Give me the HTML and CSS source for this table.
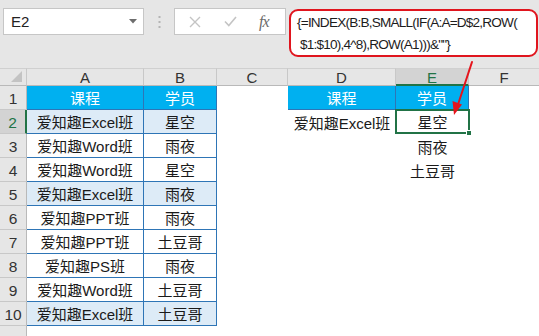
FILE: index.html
```html
<!DOCTYPE html>
<html>
<head>
<meta charset="utf-8">
<link rel="stylesheet" href="styles.css">
</head>
<body>
<div class="app">
  <div class="toolbar">
    <div class="namebox">
      <span class="nb-text">E2</span>
      <svg class="nb-arrow" width="8" height="5" viewBox="0 0 8 5"><path d="M0 0H8L4 4.5Z" fill="#6d6d6d"/></svg>
    </div>
    <div class="dots">
      <svg width="3" height="12" viewBox="0 0 3 12"><rect x="0.5" y="0" width="2" height="2" fill="#b4b4b4"/><rect x="0.5" y="5" width="2" height="2" fill="#b4b4b4"/><rect x="0.5" y="10" width="2" height="2" fill="#b4b4b4"/></svg>
    </div>
    <div class="fbar">
      <svg class="ico" width="12" height="12" viewBox="0 0 12 12"><path d="M1 1L11 11M11 1L1 11" stroke="#c4c4c4" stroke-width="1.4"/></svg>
      <svg class="ico" width="13" height="11" viewBox="0 0 13 11"><path d="M1 5.5L4.8 9.5L12 1" stroke="#c4c4c4" stroke-width="1.6" fill="none"/></svg>
      <span class="fx">fx</span>
    </div>
    <div class="formula">{=INDEX(B:B,SMALL(IF(A:A=D$2,ROW(<br>&nbsp;$1:$10),4^8),ROW(A1)))&amp;""}</div>
  </div>

  <div class="sheet">
    <div class="corner"><svg width="11" height="11" viewBox="0 0 11 11"><path d="M11 0V11H0Z" fill="#c3c3c3"/></svg></div>
    <div class="ch">A</div>
    <div class="ch">B</div>
    <div class="ch">C</div>
    <div class="ch">D</div>
    <div class="ch ch-sel">E</div>
    <div class="ch ch-last">F</div>

    <div class="rh">1</div>
    <div class="c hd bl">课程</div>
    <div class="c hd bl">学员</div>
    <div class="c"></div>
    <div class="c hd bl">课程</div>
    <div class="c hd bl">学员</div>
    <div class="c"></div>

    <div class="rh rh-sel">2</div>
    <div class="c tb lb">爱知趣Excel班</div>
    <div class="c tb lb">星空</div>
    <div class="c"></div>
    <div class="c">爱知趣Excel班</div>
    <div class="c sel">星空<span class="handle"></span></div>
    <div class="c"></div>

    <div class="rh">3</div>
    <div class="c tb">爱知趣Word班</div>
    <div class="c tb">雨夜</div>
    <div class="c"></div>
    <div class="c"></div>
    <div class="c">雨夜</div>
    <div class="c"></div>

    <div class="rh">4</div>
    <div class="c tb">爱知趣Word班</div>
    <div class="c tb">星空</div>
    <div class="c"></div>
    <div class="c"></div>
    <div class="c">土豆哥</div>
    <div class="c"></div>

    <div class="rh">5</div>
    <div class="c tb lb">爱知趣Excel班</div>
    <div class="c tb lb">雨夜</div>
    <div class="c"></div><div class="c"></div><div class="c"></div><div class="c"></div>

    <div class="rh">6</div>
    <div class="c tb">爱知趣PPT班</div>
    <div class="c tb">雨夜</div>
    <div class="c"></div><div class="c"></div><div class="c"></div><div class="c"></div>

    <div class="rh">7</div>
    <div class="c tb">爱知趣PPT班</div>
    <div class="c tb">土豆哥</div>
    <div class="c"></div><div class="c"></div><div class="c"></div><div class="c"></div>

    <div class="rh">8</div>
    <div class="c tb">爱知趣PS班</div>
    <div class="c tb">雨夜</div>
    <div class="c"></div><div class="c"></div><div class="c"></div><div class="c"></div>

    <div class="rh">9</div>
    <div class="c tb">爱知趣Word班</div>
    <div class="c tb">土豆哥</div>
    <div class="c"></div><div class="c"></div><div class="c"></div><div class="c"></div>

    <div class="rh">10</div>
    <div class="c tb lb">爱知趣Excel班</div>
    <div class="c tb lb">土豆哥</div>
    <div class="c"></div><div class="c"></div><div class="c"></div><div class="c"></div>

    <div class="rh rh-end"></div>
    <div class="c"></div><div class="c"></div><div class="c"></div><div class="c"></div><div class="c"></div><div class="c"></div>
  </div>

  <svg class="arrow" width="40" height="70" viewBox="0 0 40 70">
    <path d="M32 3L17.5 47" stroke="#e5141c" stroke-width="2" fill="none" stroke-linecap="round"/>
    <path d="M14 56L12.5 42L22 45.5Z" fill="#e5141c"/>
  </svg>
</div>
</body>
</html>
```

FILE: styles.css
```css
* { box-sizing: border-box; }
html, body { margin: 0; padding: 0; }
body {
  width: 539px;
  height: 336px;
  overflow: hidden;
  background: #ffffff;
  font-family: "Liberation Sans", "Noto Sans CJK SC", sans-serif;
}
.app {
  position: relative;
  width: 539px;
  height: 336px;
}
.toolbar {
  height: 68px;
  background: #e6e6e6;
  display: flex;
  align-items: flex-start;
  padding: 8px 0 0 3px;
}
.namebox {
  width: 141px;
  height: 27px;
  background: #fff;
  border: 1px solid #c6c6c6;
  display: flex;
  align-items: center;
  justify-content: space-between;
  padding: 0 6px 0 7px;
  font-size: 15px;
  color: #222;
}
.dots {
  width: 30px;
  height: 27px;
  display: flex;
  align-items: center;
  justify-content: center;
}
.fbar {
  width: 112px;
  height: 27px;
  background: #fff;
  border: 1px solid #c6c6c6;
  display: flex;
  align-items: center;
  padding-left: 14px;
}
.fbar .ico { margin-right: 23px; }
.fbar .ico + .ico { margin-right: 22px; }
.fx {
  font-family: "Liberation Serif", serif;
  font-style: italic;
  font-size: 16px;
  color: #6b6b6b;
  letter-spacing: -1px;
}
.formula {
  margin-left: 3px;
  margin-top: 1px;
  width: 249px;
  height: 48px;
  background: #fff;
  border: 2px solid #e0151e;
  border-radius: 9px;
  font-size: 13.6px;
  letter-spacing: -0.8px;
  line-height: 22px;
  padding: 1px 0 0 6px;
  color: #1c1c1c;
  white-space: nowrap;
  overflow: hidden;
}

.sheet {
  display: grid;
  grid-template-columns: 27px 117px 73px 71px 108px 73px 70px;
  grid-template-rows: 18px repeat(10, 24px) 10px;
  font-size: 15px;
  color: #1a1a1a;
}
.corner {
  background: #e6e6e6;
  border-right: 1px solid #c8c8c8;
  border-bottom: 1px solid #b9b9b9;
  border-top: 1px solid #d0d0d0;
  display: flex;
  align-items: flex-end;
  justify-content: flex-end;
  padding: 0 4px 3px 0;
}
.ch {
  background: #e6e6e6;
  border-top: 1px solid #d0d0d0;
  border-right: 1px solid #c8c8c8;
  border-bottom: 1px solid #b9b9b9;
  display: flex;
  align-items: center;
  justify-content: center;
  font-size: 15px;
  color: #333;
  padding-top: 1px;
}
.ch-sel {
  background: #d3d3d3;
  border-bottom: 2px solid #217346;
  color: #217346;
}
.ch-last { border-right: none; }
.rh {
  background: #e6e6e6;
  border-right: 1px solid #b9b9b9;
  border-bottom: 1px solid #c8c8c8;
  display: flex;
  align-items: center;
  justify-content: center;
  font-size: 15.5px;
  color: #333;
  padding-top: 3px;
}
.rh-sel {
  background: #d3d3d3;
  border-right: 2px solid #217346;
  color: #217346;
}
.rh-end { border-bottom: none; }
.c {
  display: flex;
  align-items: center;
  justify-content: center;
  white-space: nowrap;
  position: relative;
}
.tb {
  border-right: 1px solid #2e75b6;
  border-bottom: 1px solid #2e75b6;
}
.hd {
  background: #00b0f0;
  color: #fff;
}
.bl {
  border-right: 1px solid #2e75b6;
  border-bottom: 1px solid #2e75b6;
}
.lb { background: #ddebf7; }
.sel {
  border: 2px solid #217346;
  margin: -1px -1px 0 -1px;
}
.handle {
  position: absolute;
  right: -4px;
  bottom: -4px;
  width: 6px;
  height: 6px;
  background: #217346;
  border: 1px solid #fff;
}
.arrow {
  position: absolute;
  left: 440px;
  top: 59px;
}
```
